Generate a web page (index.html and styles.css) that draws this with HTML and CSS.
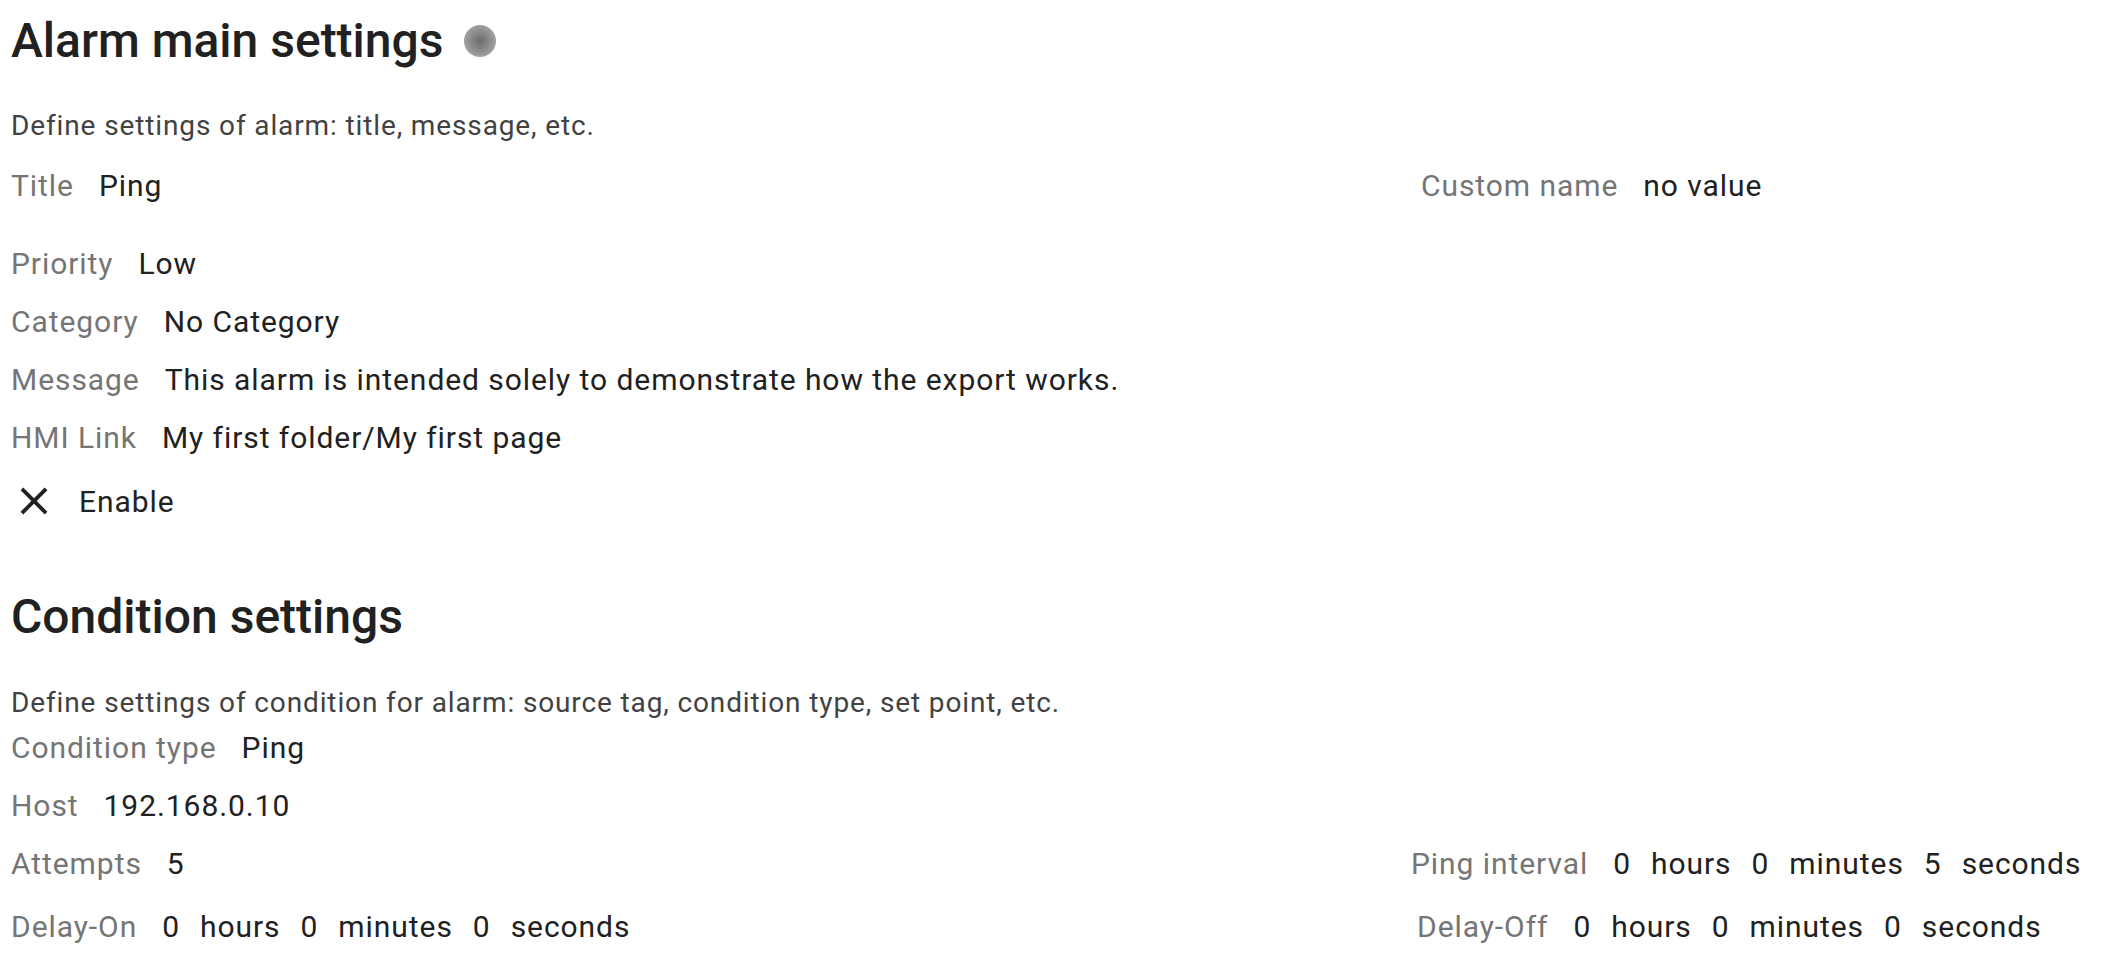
FILE: index.html
```html
<!DOCTYPE html>
<html lang="en">
<head>
    <meta charset="UTF-8">
    <meta name="viewport" content="width=device-width, initial-scale=1.0">
    <title>Alarm settings</title>
    <link rel="stylesheet" href="styles.css">
</head>
<body>
<div class="page">

    <!-- Alarm main settings -->
    <h2 class="section-title">Alarm main settings <span class="status-dot"></span></h2>
    <p class="section-desc first">Define settings of alarm: title, message, etc.</p>

    <div class="split title-row">
        <div class="field">
            <span class="label">Title</span>
            <span class="value">Ping</span>
        </div>
        <div class="field custom-name">
            <span class="label">Custom name</span>
            <span class="value">no value</span>
        </div>
    </div>

    <div class="field priority-row">
        <span class="label">Priority</span>
        <span class="value">Low</span>
    </div>
    <div class="field next">
        <span class="label">Category</span>
        <span class="value">No Category</span>
    </div>
    <div class="field next">
        <span class="label">Message</span>
        <span class="value">This alarm is intended solely to demonstrate how the export works.</span>
    </div>
    <div class="field next">
        <span class="label">HMI Link</span>
        <span class="value">My first folder/My first page</span>
    </div>

    <div class="check-row">
        <svg class="check-icon" viewBox="0 0 24 24" width="46" height="46">
            <path d="M19 6.41L17.59 5 12 10.59 6.41 5 5 6.41 10.59 12 5 17.59 6.41 19 12 13.41 17.59 19 19 17.59 13.41 12z" fill="#212121"/>
        </svg>
        <span class="value">Enable</span>
    </div>

    <!-- Condition settings -->
    <h2 class="section-title second">Condition settings</h2>
    <p class="section-desc">Define settings of condition for alarm: source tag, condition type, set point, etc.</p>

    <div class="field cond-row">
        <span class="label">Condition type</span>
        <span class="value">Ping</span>
    </div>
    <div class="field next">
        <span class="label">Host</span>
        <span class="value">192.168.0.10</span>
    </div>

    <div class="split attempts-row">
        <div class="field">
            <span class="label">Attempts</span>
            <span class="value">5</span>
        </div>
        <div class="field">
            <span class="label">Ping interval</span>
            <span class="duration">
                <span class="value">0</span><span class="value">hours</span>
                <span class="value">0</span><span class="value">minutes</span>
                <span class="value">5</span><span class="value">seconds</span>
            </span>
        </div>
    </div>

    <div class="split delay-row">
        <div class="field">
            <span class="label">Delay-On</span>
            <span class="duration">
                <span class="value">0</span><span class="value">hours</span>
                <span class="value">0</span><span class="value">minutes</span>
                <span class="value">0</span><span class="value">seconds</span>
            </span>
        </div>
        <div class="field delay-off">
            <span class="label">Delay-Off</span>
            <span class="duration">
                <span class="value">0</span><span class="value">hours</span>
                <span class="value">0</span><span class="value">minutes</span>
                <span class="value">0</span><span class="value">seconds</span>
            </span>
        </div>
    </div>

</div>
</body>
</html>
```

FILE: styles.css
```css
body {
    margin: 0;
    background: #fff;
    font-family: Roboto, "Noto Sans", sans-serif;
    color: #212121;
}

.page {
    padding: 13px 11px 0 11px;
    display: flex;
    flex-direction: column;
}

.section-title {
    margin: 0;
    font-size: 48px;
    font-weight: 500;
    line-height: 56px;
    color: #212121;
    display: flex;
    align-items: center;
}

.section-title.second {
    margin-top: 68px;
}

.status-dot {
    display: inline-block;
    width: 32px;
    height: 32px;
    margin-left: 21px;
    border-radius: 50%;
    background: radial-gradient(circle, #6c6c6c 0%, #959595 55%, #b4b4b4 100%);
}

.section-desc {
    margin: 40px 0 0 0;
    font-size: 28px;
    line-height: 36px;
    letter-spacing: 0.03125em;
    color: #424242;
}

.section-desc.first {
    margin-top: 39px;
}

.field {
    display: flex;
    align-items: baseline;
    gap: 25px;
    font-size: 30px;
    line-height: 40px;
    letter-spacing: 0.03125em;
}

.label {
    color: #757575;
}

.value {
    color: #212121;
}

.duration {
    display: flex;
    gap: 20px;
}

.split {
    display: grid;
    grid-template-columns: 1400px auto;
}

.title-row {
    margin-top: 22px;
}

.custom-name {
    padding-left: 10px;
}

.delay-off {
    padding-left: 6px;
}

.priority-row {
    margin-top: 38px;
}

.next {
    margin-top: 18px;
}

.check-row {
    display: flex;
    align-items: center;
    gap: 22px;
    margin-top: 23px;
    height: 40px;
    font-size: 30px;
    letter-spacing: 0.03125em;
}

.cond-row {
    margin-top: 7px;
}

.attempts-row {
    margin-top: 18px;
}

.delay-row {
    margin-top: 23px;
}
```
